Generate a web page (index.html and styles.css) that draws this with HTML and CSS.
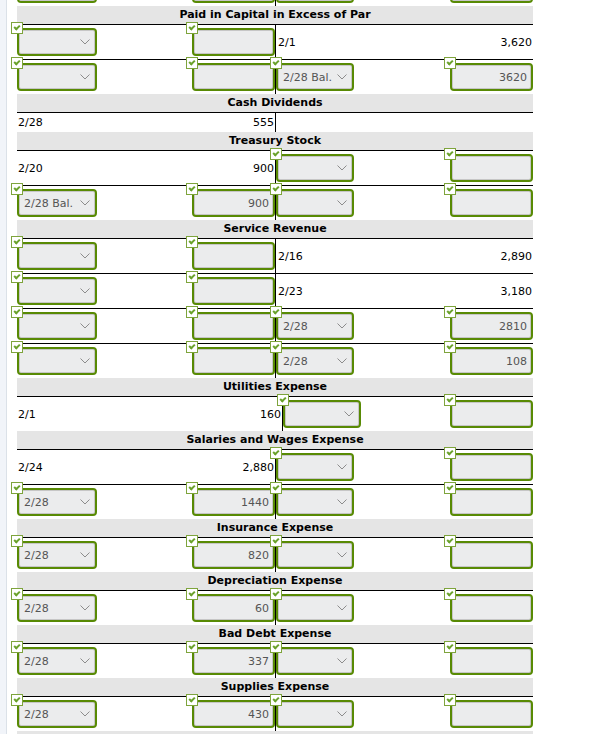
FILE: index.html
```html
<!DOCTYPE html>
<html lang="en">
<head>
    <meta charset="UTF-8">
    <meta name="viewport" content="width=device-width, initial-scale=1.0">
    <title>T-Accounts</title>
    <link rel="stylesheet" href="styles.css">
</head>
<body>
<div class="frame">
    <div class="sheet">

        <!-- tail of the account above, scrolled out of view -->
        <section class="account">
            <div class="row">
                <div class="side dr">
                    <span class="fld sel"><span></span><svg class="chev" viewBox="0 0 10 6"><polyline points="0.5,0.5 5,5 9.5,0.5"/></svg></span>
                    <span class="fld amt"></span>
                </div>
                <div class="side cr">
                    <span class="fld sel"><span></span><svg class="chev" viewBox="0 0 10 6"><polyline points="0.5,0.5 5,5 9.5,0.5"/></svg></span>
                    <span class="fld amt"></span>
                </div>
            </div>
        </section>

        <section class="account">
            <h3 class="title">Paid in Capital in Excess of Par</h3>
            <div class="row">
                <div class="side dr">
                    <span class="fld sel ok"><span></span><svg class="chev" viewBox="0 0 10 6"><polyline points="0.5,0.5 5,5 9.5,0.5"/></svg></span>
                    <span class="fld amt ok"></span>
                </div>
                <div class="side cr">
                    <span class="txt">2/1</span>
                    <span class="txt">3,620</span>
                </div>
            </div>
            <div class="row">
                <div class="side dr">
                    <span class="fld sel ok"><span></span><svg class="chev" viewBox="0 0 10 6"><polyline points="0.5,0.5 5,5 9.5,0.5"/></svg></span>
                    <span class="fld amt ok"></span>
                </div>
                <div class="side cr">
                    <span class="fld sel ok"><span>2/28 Bal.</span><svg class="chev" viewBox="0 0 10 6"><polyline points="0.5,0.5 5,5 9.5,0.5"/></svg></span>
                    <span class="fld amt ok">3620</span>
                </div>
            </div>
        </section>

        <section class="account">
            <h3 class="title">Cash Dividends</h3>
            <div class="row short">
                <div class="side dr">
                    <span class="txt">2/28</span>
                    <span class="txt">555</span>
                </div>
                <div class="side cr"></div>
            </div>
        </section>

        <section class="account">
            <h3 class="title">Treasury Stock</h3>
            <div class="row">
                <div class="side dr">
                    <span class="txt">2/20</span>
                    <span class="txt">900</span>
                </div>
                <div class="side cr">
                    <span class="fld sel ok"><span></span><svg class="chev" viewBox="0 0 10 6"><polyline points="0.5,0.5 5,5 9.5,0.5"/></svg></span>
                    <span class="fld amt ok"></span>
                </div>
            </div>
            <div class="row">
                <div class="side dr">
                    <span class="fld sel ok"><span>2/28 Bal.</span><svg class="chev" viewBox="0 0 10 6"><polyline points="0.5,0.5 5,5 9.5,0.5"/></svg></span>
                    <span class="fld amt ok">900</span>
                </div>
                <div class="side cr">
                    <span class="fld sel ok"><span></span><svg class="chev" viewBox="0 0 10 6"><polyline points="0.5,0.5 5,5 9.5,0.5"/></svg></span>
                    <span class="fld amt ok"></span>
                </div>
            </div>
        </section>

        <section class="account">
            <h3 class="title">Service Revenue</h3>
            <div class="row">
                <div class="side dr">
                    <span class="fld sel ok"><span></span><svg class="chev" viewBox="0 0 10 6"><polyline points="0.5,0.5 5,5 9.5,0.5"/></svg></span>
                    <span class="fld amt ok"></span>
                </div>
                <div class="side cr">
                    <span class="txt">2/16</span>
                    <span class="txt">2,890</span>
                </div>
            </div>
            <div class="row">
                <div class="side dr">
                    <span class="fld sel ok"><span></span><svg class="chev" viewBox="0 0 10 6"><polyline points="0.5,0.5 5,5 9.5,0.5"/></svg></span>
                    <span class="fld amt ok"></span>
                </div>
                <div class="side cr">
                    <span class="txt">2/23</span>
                    <span class="txt">3,180</span>
                </div>
            </div>
            <div class="row">
                <div class="side dr">
                    <span class="fld sel ok"><span></span><svg class="chev" viewBox="0 0 10 6"><polyline points="0.5,0.5 5,5 9.5,0.5"/></svg></span>
                    <span class="fld amt ok"></span>
                </div>
                <div class="side cr">
                    <span class="fld sel ok"><span>2/28</span><svg class="chev" viewBox="0 0 10 6"><polyline points="0.5,0.5 5,5 9.5,0.5"/></svg></span>
                    <span class="fld amt ok">2810</span>
                </div>
            </div>
            <div class="row">
                <div class="side dr">
                    <span class="fld sel ok"><span></span><svg class="chev" viewBox="0 0 10 6"><polyline points="0.5,0.5 5,5 9.5,0.5"/></svg></span>
                    <span class="fld amt ok"></span>
                </div>
                <div class="side cr">
                    <span class="fld sel ok"><span>2/28</span><svg class="chev" viewBox="0 0 10 6"><polyline points="0.5,0.5 5,5 9.5,0.5"/></svg></span>
                    <span class="fld amt ok">108</span>
                </div>
            </div>
        </section>

        <section class="account wide">
            <h3 class="title">Utilities Expense</h3>
            <div class="row">
                <div class="side dr">
                    <span class="txt">2/1</span>
                    <span class="txt">160</span>
                </div>
                <div class="side cr">
                    <span class="fld sel ok"><span></span><svg class="chev" viewBox="0 0 10 6"><polyline points="0.5,0.5 5,5 9.5,0.5"/></svg></span>
                    <span class="fld amt ok"></span>
                </div>
            </div>
        </section>

        <section class="account">
            <h3 class="title">Salaries and Wages Expense</h3>
            <div class="row">
                <div class="side dr">
                    <span class="txt">2/24</span>
                    <span class="txt">2,880</span>
                </div>
                <div class="side cr">
                    <span class="fld sel ok"><span></span><svg class="chev" viewBox="0 0 10 6"><polyline points="0.5,0.5 5,5 9.5,0.5"/></svg></span>
                    <span class="fld amt ok"></span>
                </div>
            </div>
            <div class="row">
                <div class="side dr">
                    <span class="fld sel ok"><span>2/28</span><svg class="chev" viewBox="0 0 10 6"><polyline points="0.5,0.5 5,5 9.5,0.5"/></svg></span>
                    <span class="fld amt ok">1440</span>
                </div>
                <div class="side cr">
                    <span class="fld sel ok"><span></span><svg class="chev" viewBox="0 0 10 6"><polyline points="0.5,0.5 5,5 9.5,0.5"/></svg></span>
                    <span class="fld amt ok"></span>
                </div>
            </div>
        </section>

        <section class="account">
            <h3 class="title">Insurance Expense</h3>
            <div class="row">
                <div class="side dr">
                    <span class="fld sel ok"><span>2/28</span><svg class="chev" viewBox="0 0 10 6"><polyline points="0.5,0.5 5,5 9.5,0.5"/></svg></span>
                    <span class="fld amt ok">820</span>
                </div>
                <div class="side cr">
                    <span class="fld sel ok"><span></span><svg class="chev" viewBox="0 0 10 6"><polyline points="0.5,0.5 5,5 9.5,0.5"/></svg></span>
                    <span class="fld amt ok"></span>
                </div>
            </div>
        </section>

        <section class="account">
            <h3 class="title">Depreciation Expense</h3>
            <div class="row">
                <div class="side dr">
                    <span class="fld sel ok"><span>2/28</span><svg class="chev" viewBox="0 0 10 6"><polyline points="0.5,0.5 5,5 9.5,0.5"/></svg></span>
                    <span class="fld amt ok">60</span>
                </div>
                <div class="side cr">
                    <span class="fld sel ok"><span></span><svg class="chev" viewBox="0 0 10 6"><polyline points="0.5,0.5 5,5 9.5,0.5"/></svg></span>
                    <span class="fld amt ok"></span>
                </div>
            </div>
        </section>

        <section class="account">
            <h3 class="title">Bad Debt Expense</h3>
            <div class="row">
                <div class="side dr">
                    <span class="fld sel ok"><span>2/28</span><svg class="chev" viewBox="0 0 10 6"><polyline points="0.5,0.5 5,5 9.5,0.5"/></svg></span>
                    <span class="fld amt ok">337</span>
                </div>
                <div class="side cr">
                    <span class="fld sel ok"><span></span><svg class="chev" viewBox="0 0 10 6"><polyline points="0.5,0.5 5,5 9.5,0.5"/></svg></span>
                    <span class="fld amt ok"></span>
                </div>
            </div>
        </section>

        <section class="account">
            <h3 class="title">Supplies Expense</h3>
            <div class="row">
                <div class="side dr">
                    <span class="fld sel ok"><span>2/28</span><svg class="chev" viewBox="0 0 10 6"><polyline points="0.5,0.5 5,5 9.5,0.5"/></svg></span>
                    <span class="fld amt ok">430</span>
                </div>
                <div class="side cr">
                    <span class="fld sel ok"><span></span><svg class="chev" viewBox="0 0 10 6"><polyline points="0.5,0.5 5,5 9.5,0.5"/></svg></span>
                    <span class="fld amt ok"></span>
                </div>
            </div>
        </section>

        <!-- next account starts just below the fold -->
        <section class="account">
            <div class="title"></div>
        </section>

    </div>
</div>
</body>
</html>
```

FILE: styles.css
```css
body {
    margin: 0;
    font-family: "DejaVu Sans", Verdana, sans-serif;
    font-size: 11px;
    color: #000;
    background: #fff;
}
.frame {
    min-height: 100vh;
    border-left: 6px solid #f1f4f9;
    box-shadow: inset 1px 0 0 #dbe1e8;
    padding-left: 11px;
    overflow: hidden;
}
.sheet {
    width: 516px;
    margin-top: -28px;
}
.title {
    margin: 0;
    height: 18px;
    line-height: 18px;
    background: #e5e5e5;
    border-bottom: 1px solid #000;
    text-align: center;
    font-size: 11px;
    font-weight: bold;
}
.row {
    display: grid;
    grid-template-columns: 258px 258px;
    height: 34px;
}
.row + .row {
    border-top: 1px solid #000;
}
.row.short {
    height: 19px;
}
.wide .row {
    grid-template-columns: 265px 251px;
}
.side {
    display: flex;
    align-items: center;
    justify-content: space-between;
}
.side.cr {
    border-left: 1px solid #000;
}
.txt {
    padding: 0 1px;
}
.cr .txt:first-child {
    padding-left: 2px;
}

/* answer fields */
.fld {
    position: relative;
    box-sizing: border-box;
    height: 28px;
    display: flex;
    align-items: center;
    border: 2px solid #588a04;
    border-radius: 4px;
    background: #ebeced;
    box-shadow: inset 0 0 0 1px #c6c6c6;
    color: #555;
}
.fld.sel {
    width: 80px;
    padding: 0 5px 0 5px;
    justify-content: space-between;
}
.cr .fld.sel {
    width: 78px;
}
.fld.amt {
    width: 83px;
    padding-right: 4px;
    justify-content: flex-end;
}
.chev {
    width: 10px;
    height: 6px;
    fill: none;
    stroke: #8c8c8c;
    stroke-width: 1;
}

/* correct-answer badge */
.fld.ok::before {
    content: "";
    position: absolute;
    left: -8px;
    top: -8px;
    width: 12px;
    height: 12px;
    box-sizing: border-box;
    border: 1px solid #7ea43c;
    background: #fff;
    z-index: 1;
}
.fld.ok::after {
    content: "";
    position: absolute;
    left: -5px;
    top: -5px;
    width: 4px;
    height: 2px;
    border-left: 2px solid #6ba22c;
    border-bottom: 2px solid #6ba22c;
    transform: rotate(-45deg);
    z-index: 2;
}
```
